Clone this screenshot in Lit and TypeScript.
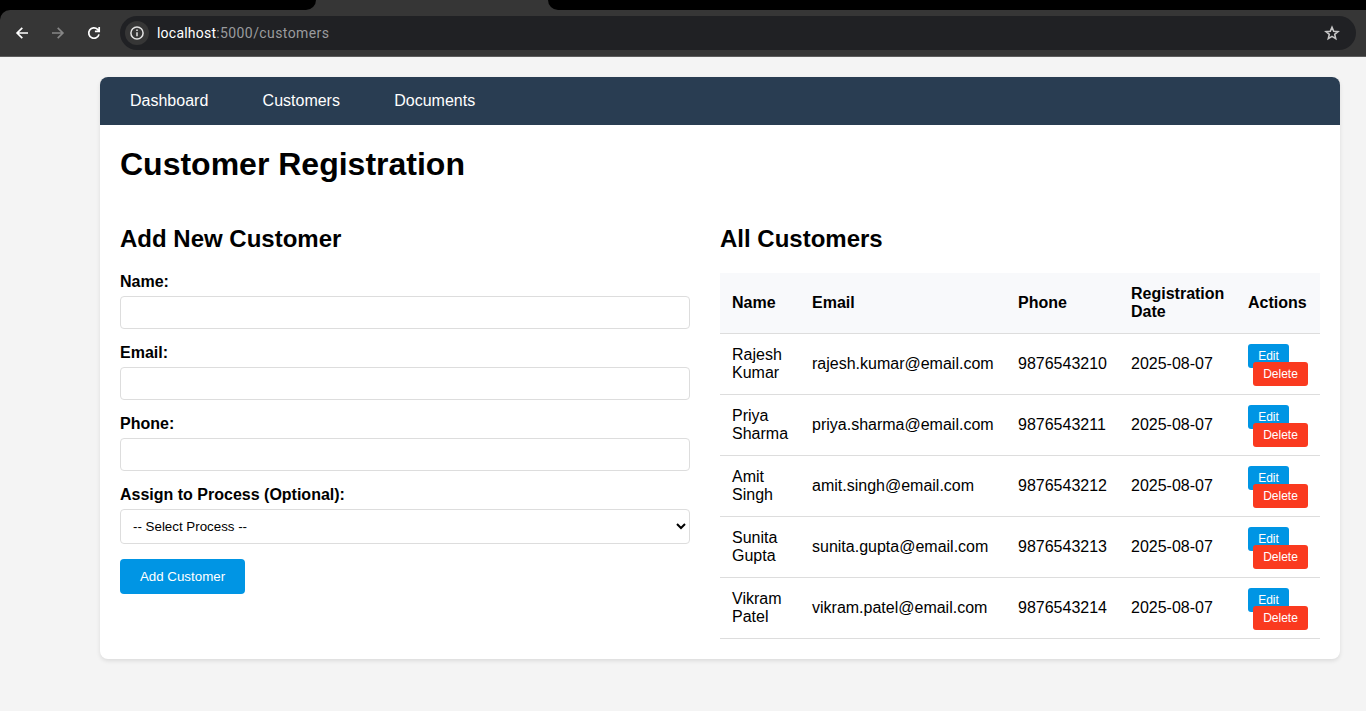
import { LitElement, html, css } from "lit";
import { customElement } from "lit/decorators.js";

@customElement("browser-bar")
class BrowserBar extends LitElement {
  static styles = css`
    :host { display: block; font-family: Roboto, sans-serif; }
    .strip { height: 10px; background: #363636; display: flex; justify-content: space-between; }
    .tabs-left { width: 316px; background: #000; border-bottom-right-radius: 10px; }
    .tabs-right { width: 818px; background: #000; border-bottom-left-radius: 10px; }
    .bar-wrap { background: linear-gradient(90deg, #000 20px, #363636 20px); }
    .bar {
      height: 46px; box-sizing: border-box; background: #363636; border-top-left-radius: 10px;
      display: flex; align-items: center; padding: 0 10px 0 13px;
    }
    .nav-icon { display: block; width: 18px; height: 18px; margin-right: 18px; }
    .address {
      flex: 1; height: 34px; border-radius: 17px; background: #202124; display: flex;
      align-items: center; padding: 0 15px 0 5px; margin-left: -1px; box-sizing: border-box;
    }
    .info { width: 24px; height: 24px; border-radius: 50%; background: #363636; display: flex; align-items: center; justify-content: center; }
    .url { flex: 1; margin-left: 8px; font-size: 14px; letter-spacing: 0.41px; color: #9a9b9e; white-space: nowrap; }
    .host { color: #fff; letter-spacing: 0.22px; }
    .line { height: 1px; background: #5c5c5c; }
  `;
  render() {
    return html`
      <div class="strip"><div class="tabs-left"></div><div class="tabs-right"></div></div>
      <div class="bar-wrap"><div class="bar">
        <svg class="nav-icon" viewBox="0 0 18 18" fill="none" stroke="#fff" stroke-width="1.7"><path d="M15 9H4.2M9.3 3.8L4.1 9l5.2 5.2"/></svg>
        <svg class="nav-icon" viewBox="0 0 18 18" fill="none" stroke="#868686" stroke-width="1.7"><path d="M3 9h10.8M8.7 3.8L13.9 9l-5.2 5.2"/></svg>
        <svg class="nav-icon" viewBox="0 0 18 18" fill="none" stroke="#fff" stroke-width="1.7"><path d="M14 10.4A5.2 5.2 0 1 1 12.6 5.3L14 6.9M14.2 3v4.3H9.9"/></svg>
        <div class="address">
          <div class="info"><svg width="16" height="16" viewBox="0 0 16 16" fill="none" stroke="#e3e3e3" stroke-width="1.5"><circle cx="8" cy="8" r="6.1"/><path d="M8 7.2v4M8 4.6v1.5" stroke-width="1.5"/></svg></div>
          <div class="url"><span class="host">localhost</span>:5000/customers</div>
          <svg width="18" height="18" viewBox="0 0 18 18" fill="none" stroke="#c7c7c7" stroke-width="1.6"><path d="M9 3.2l1.7 4 4.3.4-3.3 2.8 1 4.2L9 12.4l-3.7 2.2 1-4.2L3 7.6l4.3-.4z"/></svg>
        </div>
      </div></div>
      <div class="line"></div>
    `;
  }
}

const customers = [
  ["Rajesh Kumar", "rajesh.kumar@email.com", "9876543210"],
  ["Priya Sharma", "priya.sharma@email.com", "9876543211"],
  ["Amit Singh", "amit.singh@email.com", "9876543212"],
  ["Sunita Gupta", "sunita.gupta@email.com", "9876543213"],
  ["Vikram Patel", "vikram.patel@email.com", "9876543214"],
];

@customElement("app-root")
class AppRoot extends LitElement {
  static styles = css`
    :host {
      display: block; height: 711px; overflow: hidden; background: #f4f4f4; color: #000;
      font-family: "Liberation Sans", Arial, sans-serif; font-size: 16px; line-height: 18px;
    }
    .card {
      margin: 20px 26px 0 100px; height: 582px; background: #fff; border-radius: 8px;
      box-shadow: 0 2px 4px rgba(0, 0, 0, 0.1); overflow: hidden;
    }
    .menu { height: 48px; background: #293d52; display: flex; align-items: center; padding-left: 30px; gap: 54.3px; }
    .menu a { color: #fff; text-decoration: none; }
    .content { padding: 20px; }
    h1 { margin: 0; font-size: 32px; line-height: 39px; }
    h2 { margin: 0 0 20px; font-size: 24px; line-height: 28px; }
    .columns { display: grid; grid-template-columns: 570px 600px; gap: 30px; margin-top: 41px; align-items: start; }
    .field { margin-bottom: 15px; }
    label { display: block; font-weight: bold; margin-bottom: 5px; }
    input, select {
      display: block; width: 100%; box-sizing: border-box; height: 33px; border: 1px solid #ddd;
      border-radius: 4px; padding: 8px; background: #fff; color: #000; font: 13.333px "Liberation Sans", Arial, sans-serif;
    }
    select { height: 35px; }
    button { border: 0; color: #fff; font-family: "Liberation Sans", Arial, sans-serif; background: #0095e4; display: block; }
    .submit { width: 125px; height: 35px; border-radius: 4px; font-size: 13.333px; padding: 0; }
    table { width: 600px; border-collapse: collapse; table-layout: fixed; }
    th, td { box-sizing: content-box; padding: 12px; text-align: left; vertical-align: middle; border-bottom: 1px solid #ddd; height: 36px; }
    th { background: #f8f9fb; }
    .c-name { width: 80px; }
    .c-email { width: 206px; }
    .c-phone { width: 113px; }
    .c-date { width: 117px; }
    .c-actions { width: 84px; }
    .actions { display: flex; flex-direction: column; align-items: flex-start; height: 36px; }
    .small { height: 24px; font-size: 12px; padding: 0; border-radius: 3px; flex: none; margin-top: -2px; }
    .edit { width: 41px; }
    .delete { width: 55px; background: #fa3a1f; margin: -6px 0 0 5px; }
  `;
  render() {
    return html`
      <browser-bar></browser-bar>
      <main class="card">
        <nav class="menu"><a>Dashboard</a><a>Customers</a><a>Documents</a></nav>
        <div class="content">
          <h1>Customer Registration</h1>
          <div class="columns">
            <section>
              <h2>Add New Customer</h2>
              ${["Name:", "Email:", "Phone:"].map((l) => html`<div class="field"><label>${l}</label><input type="text" /></div>`)}
              <div class="field">
                <label>Assign to Process (Optional):</label>
                <select><option>-- Select Process --</option></select>
              </div>
              <button class="submit">Add Customer</button>
            </section>
            <section>
              <h2>All Customers</h2>
              <table>
                <colgroup><col class="c-name" /><col class="c-email" /><col class="c-phone" /><col class="c-date" /><col class="c-actions" /></colgroup>
                <thead><tr><th>Name</th><th>Email</th><th>Phone</th><th>Registration Date</th><th>Actions</th></tr></thead>
                <tbody>
                  ${customers.map(([name, email, phone]) => html`<tr>
                    <td>${name}</td><td>${email}</td><td>${phone}</td><td>2025-08-07</td>
                    <td><div class="actions"><button class="small edit">Edit</button><button class="small delete">Delete</button></div></td>
                  </tr>`)}
                </tbody>
              </table>
            </section>
          </div>
        </div>
      </main>
    `;
  }
}
